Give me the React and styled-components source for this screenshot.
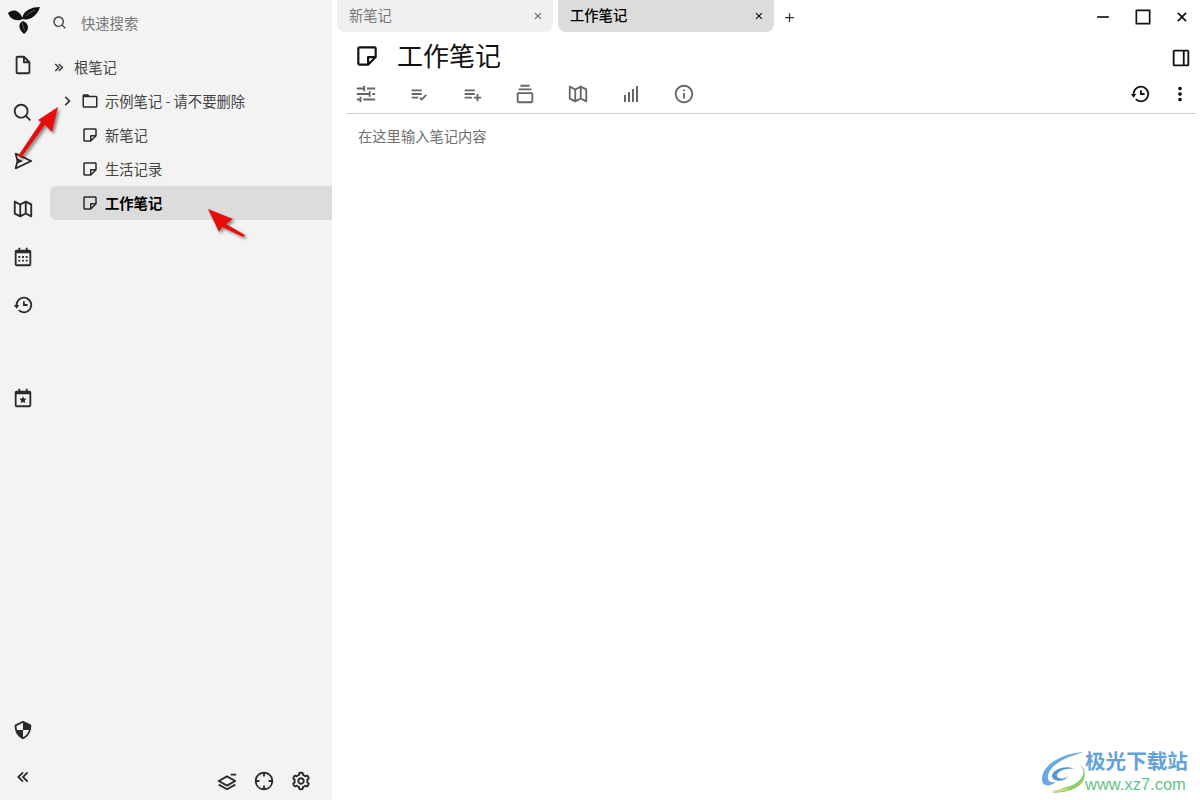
import React from 'react';
import styled, { createGlobalStyle } from 'styled-components';
import {
  BiFileBlank, BiSearch, BiSend, BiMapAlt, BiCalendar, BiHistory, BiCalendarStar, BiShieldQuarter,
  BiChevronsLeft, BiChevronsRight, BiChevronRight, BiFolder, BiNote, BiSlider, BiListCheck, BiListPlus,
  BiCollection, BiInfoCircle, BiDotsVerticalRounded, BiLayerMinus, BiCrosshair, BiCog, BiDockRight, BiX, BiPlus, BiMinus, BiSquare,
} from 'react-icons/bi';

const Global = createGlobalStyle`
  html, body { margin: 0; height: 100%; background: #fff; }
  #root { height: 100%; }
  * { box-sizing: border-box; }
  body { font-family: "Noto Sans CJK SC", "Noto Sans", sans-serif; overflow: hidden; }
`;

const Page = styled.div`
  position: relative;
  width: 1200px;
  height: 800px;
  display: flex;
  overflow: hidden;
`;
const Launcher = styled.nav`
  width: 46px;
  background: #f3f3f3;
  display: flex;
  flex-direction: column;
  flex: none;
`;
const LogoBox = styled.div`
  height: 41px;
  padding: 4px 0 0 7px;
`;
const LauncherBtn = styled.div`
  height: ${p => p.$h || 48}px;
  display: flex;
  align-items: center;
  justify-content: center;
  color: #2a2a2a;
  font-size: 22px;
`;
const LauncherGap = styled.div`
  height: ${p => p.$h}px;
`;
const Grow = styled.div`
  flex: 1;
`;
const Side = styled.aside`
  width: 286px;
  flex: none;
  background: #f3f3f3;
  display: flex;
  flex-direction: column;
`;
const SearchBar = styled.div`
  height: 50px;
  padding: 0 0 5px 6px;
  display: flex;
  align-items: center;
  color: #777;
  font-size: 14.3px;
  svg { font-size: 16px; color: #444; margin-right: 13px; }
`;
const Tree = styled.div`
  margin-left: 4px;
  flex: 1;
`;
const Row = styled.div`
  height: 34px;
  display: flex;
  align-items: center;
  padding-left: ${p => p.$indent}px;
  font-size: 14.3px;
  font-weight: ${p => (p.$active ? 700 : 400)};
  color: ${p => (p.$active ? '#000' : '#444')};
  background: ${p => (p.$active ? '#dcdcdc' : 'transparent')};
  border-radius: ${p => (p.$active ? '6px 0 0 6px' : '0')};
`;
const RowLabel = styled.span`
  margin-top: -2px;
`;
const Caret = styled.span`
  display: flex;
  font-size: ${p => p.$size || 16}px;
  color: #333;
  margin-right: ${p => p.$gap}px;
`;
const NodeIcon = styled.span`
  display: flex;
  font-size: 18px;
  color: #2a2a2a;
  margin-right: 6px;
`;
const SideFooter = styled.div`
  height: 38px;
  padding: 8px 20px 0 0;
  display: flex;
  justify-content: flex-end;
  align-items: flex-start;
  gap: 15px;
  font-size: 22px;
  color: #2a2a2a;
`;
const Main = styled.main`
  flex: 1;
  background: #fff;
  display: flex;
  flex-direction: column;
  min-width: 0;
`;
const TabBar = styled.div`
  height: 32px;
  padding-left: 5px;
  display: flex;
  gap: 5px;
  align-items: stretch;
  flex: none;
`;
const Tab = styled.div`
  width: 216px;
  padding: 0 8px 0 12px;
  border-radius: 0 0 8px 8px;
  background: ${p => (p.$active ? '#dcdcdc' : '#f0f0f0')};
  color: ${p => (p.$active ? '#000' : '#777')};
  font-size: 14.3px;
  font-weight: ${p => (p.$active ? 500 : 400)};
  display: flex;
  align-items: center;
  justify-content: space-between;
  svg { font-size: 14px; color: ${p => (p.$active ? '#111' : '#666')}; }
`;
const TabLabel = styled.span`
  margin-top: -4px;
`;
const NewTab = styled.div`
  width: 20px;
  padding-top: 2px;
  display: flex;
  align-items: center;
  justify-content: center;
  font-size: 15px;
  color: #333;
`;
const WinBtns = styled.div`
  margin-left: auto;
  margin-right: -2px;
  padding-top: 2px;
  display: flex;
  align-items: center;
  color: #111;
`;
const WinBtn = styled.div`
  width: 39.5px;
  height: 32px;
  display: flex;
  align-items: center;
  justify-content: center;
  font-size: 20px;
`;
const TitleRow = styled.div`
  height: 46px;
  padding: 2px 8px 0 22px;
  display: flex;
  align-items: center;
  flex: none;
`;
const TitleIcon = styled.span`
  display: flex;
  font-size: 26px;
  color: #111;
  margin-right: 17px;
`;
const Title = styled.h1`
  margin: -2px 0 0;
  font-size: 26px;
  font-weight: 400;
  line-height: 36px;
  color: #111;
  flex: 1;
`;
const SidebarToggle = styled.span`
  display: flex;
  font-size: 22px;
  color: #111;
  margin: 4px 0 0 0;
`;
const Ribbon = styled.div`
  height: 36px;
  margin: 0 4px 0 14px;
  border-bottom: 1px solid #ccc;
  display: flex;
  align-items: flex-start;
  flex: none;
`;
const RibbonBtn = styled.div`
  width: 53px;
  height: 32px;
  display: flex;
  align-items: center;
  justify-content: center;
  font-size: 22px;
  color: #666;
  margin-left: ${p => (p.$first ? '-7px' : '0')};
`;
const RibbonEnd = styled.div`
  margin-left: auto;
  margin-right: -4px;
  display: flex;
  color: #111;
  font-size: 22px;
`;
const RibbonEndBtn = styled.div`
  width: 40px;
  height: 32px;
  display: flex;
  align-items: center;
  justify-content: center;
`;
const Editor = styled.div`
  padding: 12px 26px;
  font-size: 14.3px;
  line-height: 20px;
  color: #707070;
`;
const Overlay = styled.svg`
  position: absolute;
  left: 0;
  top: 0;
  pointer-events: none;
`;
const Watermark = styled.div`
  position: absolute;
  left: 1040px;
  top: 749px;
  width: 160px;
  height: 48px;
  display: flex;
`;
const MarkText = styled.div`
  margin-left: -3px;
  display: flex;
  flex-direction: column;
`;
const MarkCn = styled.div`
  height: 24px;
  margin-top: -1px;
  font-size: 20.6px;
  line-height: 24px;
  font-weight: 700;
  color: #63a3dc;
  white-space: nowrap;
`;
const MarkUrl = styled.div`
  height: 18px;
  margin-top: 3px;
  font-family: "Liberation Sans", sans-serif;
  font-size: 16.5px;
  line-height: 18px;
  color: #5fc488;
  white-space: nowrap;
`;

const Logo = () => (
  <svg width="34" height="32" viewBox="0 0 34 32">
    <path d="M1 9 C5 5 12 5 16 15 C9 18 3 15 1 9Z" fill="#111" />
    <path d="M33 3 C25 3 16 6 15 15 C23 17 30 12 33 3Z" fill="#111" />
    <path d="M16 17 C11 19 11 25 17 30 C22 26 23 20 16 17Z" fill="#111" />
    <path d="M19 12 C22 9 25 7 28 6" stroke="#888" strokeWidth="0.6" fill="none" />
    <path d="M15.5 19 L17.5 27" stroke="#888" strokeWidth="0.6" fill="none" />
  </svg>
);

const BarsIcon = () => (
  <svg width="22" height="22" viewBox="0 0 22 22" fill="currentColor">
    <rect x="4" y="12" width="2" height="7" />
    <rect x="8" y="9" width="2" height="10" />
    <rect x="12" y="6" width="2" height="13" />
    <rect x="16" y="3" width="2" height="16" />
  </svg>
);

const LogoMark = () => (
  <svg width="48" height="46" viewBox="0 0 48 46">
    <path d="M2 30 C2 16 22 4 44 3 C30 7 10 14 8 27 C7 33 12 34 16 33 C10 38 2 38 2 30Z" fill="#6aa9e0" />
    <path d="M12 26 C14 19 28 16 34 20 C26 19 18 22 17 26 C16 30 24 31 28 27 C25 34 11 33 12 26Z" fill="#5a96cf" />
    <path d="M38 15 C48 20 44 34 26 38 C20 40 16 42 12 44 C24 44 50 40 44 20 C43 18 41 16 38 15Z" fill="#8bd070" />
    <path d="M10 42 C18 44 26 42 30 39 C24 40 16 41 10 42Z" fill="#e8d96a" />
  </svg>
);

export default function App() {
  return (
    <Page>
      <Global />
      <Launcher>
        <LogoBox><Logo /></LogoBox>
        <LauncherBtn><BiFileBlank /></LauncherBtn>
        <LauncherBtn><BiSearch /></LauncherBtn>
        <LauncherBtn><BiSend /></LauncherBtn>
        <LauncherBtn><BiMapAlt /></LauncherBtn>
        <LauncherBtn><BiCalendar /></LauncherBtn>
        <LauncherBtn><BiHistory /></LauncherBtn>
        <LauncherGap $h={45} />
        <LauncherBtn><BiCalendarStar /></LauncherBtn>
        <Grow />
        <LauncherBtn><BiShieldQuarter /></LauncherBtn>
        <LauncherBtn $h={46}><BiChevronsLeft /></LauncherBtn>
      </Launcher>
      <Side>
        <SearchBar><BiSearch />快速搜索</SearchBar>
        <Tree>
          <Row $indent={1}><Caret $gap={6} $size={17}><BiChevronsRight /></Caret><RowLabel>根笔记</RowLabel></Row>
          <Row $indent={7}><Caret $gap={4} $size={20}><BiChevronRight /></Caret><NodeIcon><BiFolder /></NodeIcon><RowLabel>示例笔记 - 请不要删除</RowLabel></Row>
          <Row $indent={31}><NodeIcon><BiNote /></NodeIcon><RowLabel>新笔记</RowLabel></Row>
          <Row $indent={31}><NodeIcon><BiNote /></NodeIcon><RowLabel>生活记录</RowLabel></Row>
          <Row $indent={31} $active><NodeIcon><BiNote /></NodeIcon><RowLabel>工作笔记</RowLabel></Row>
        </Tree>
        <SideFooter>
          <BiLayerMinus />
          <BiCrosshair />
          <BiCog />
        </SideFooter>
      </Side>
      <Main>
        <TabBar>
          <Tab><TabLabel>新笔记</TabLabel><BiX /></Tab>
          <Tab $active><TabLabel>工作笔记</TabLabel><BiX /></Tab>
          <NewTab><BiPlus /></NewTab>
          <WinBtns>
            <WinBtn><BiMinus /></WinBtn>
            <WinBtn><BiSquare /></WinBtn>
            <WinBtn><BiX /></WinBtn>
          </WinBtns>
        </TabBar>
        <TitleRow>
          <TitleIcon><BiNote /></TitleIcon>
          <Title>工作笔记</Title>
          <SidebarToggle><BiDockRight /></SidebarToggle>
        </TitleRow>
        <Ribbon>
          <RibbonBtn $first><BiSlider /></RibbonBtn>
          <RibbonBtn><BiListCheck /></RibbonBtn>
          <RibbonBtn><BiListPlus /></RibbonBtn>
          <RibbonBtn><BiCollection /></RibbonBtn>
          <RibbonBtn><BiMapAlt /></RibbonBtn>
          <RibbonBtn><BarsIcon /></RibbonBtn>
          <RibbonBtn><BiInfoCircle /></RibbonBtn>
          <RibbonEnd>
            <RibbonEndBtn><BiHistory /></RibbonEndBtn>
            <RibbonEndBtn><BiDotsVerticalRounded /></RibbonEndBtn>
          </RibbonEnd>
        </Ribbon>
        <Editor>在这里输入笔记内容</Editor>
      </Main>
      <Overlay width="1200" height="800" viewBox="0 0 1200 800">
        <defs>
          <filter id="sh" x="-30%" y="-30%" width="170%" height="170%">
            <feDropShadow dx="2" dy="2" stdDeviation="1.5" floodColor="#000" floodOpacity="0.45" />
          </filter>
        </defs>
        <polygon filter="url(#sh)" fill="#e60d0d" points="58,107 52,132 45,125 21,158 18,156 41,122 38,120" />
        <polygon filter="url(#sh)" fill="#e60d0d" points="208,209 233,219 226,224 245,235 243,237 222,227 219,232" />
      </Overlay>
      <Watermark>
        <LogoMark />
        <MarkText>
          <MarkCn>极光下载站</MarkCn>
          <MarkUrl>www.xz7.com</MarkUrl>
        </MarkText>
      </Watermark>
    </Page>
  );
}
